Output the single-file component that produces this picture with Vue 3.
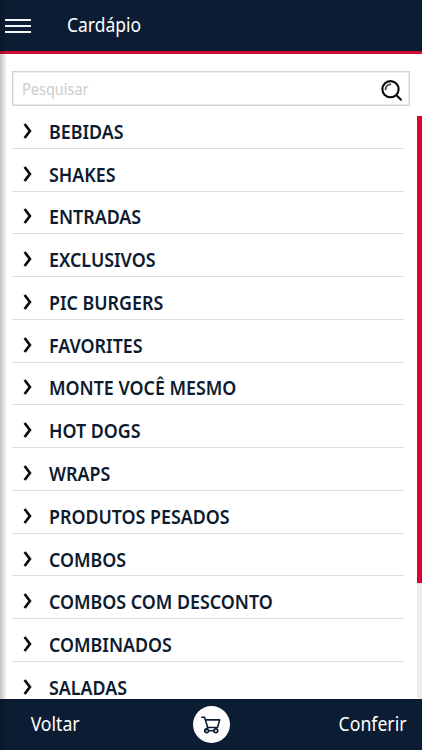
<template>
  <div class="menu-page">
    <header class="top-bar">
      <button class="menu-button" aria-label="Menu">
        <span></span>
        <span></span>
        <span></span>
      </button>
      <h1>Cardápio</h1>
    </header>

    <main class="content">
      <div class="search-box">
        <input v-model="search" type="text" placeholder="Pesquisar" />
        <svg class="search-icon" viewBox="0 0 24 24">
          <circle cx="10.5" cy="10.2" r="8.1" />
          <path class="shine" d="M5.6 10.2a5 5 0 0 1 4.8-4.8" />
          <path d="M16.5 16.3l4.4 4.4" />
        </svg>
      </div>

      <div class="list-area">
        <ul class="category-list">
          <li v-for="category in filteredCategories" :key="category">
            <svg class="chevron" viewBox="0 0 10 16">
              <path d="M1.6 1l5.3 7-5.3 7" />
            </svg>
            <span class="category-name">{{ category }}</span>
          </li>
        </ul>
        <div class="scrollbar">
          <div class="scrollbar-thumb"></div>
        </div>
      </div>
    </main>

    <footer class="bottom-bar">
      <button class="footer-link">Voltar</button>
      <button class="cart-button" aria-label="Carrinho">
        <svg viewBox="0 0 20 18">
          <path d="M.8 1.3h2.7l3.2 10.2h9.8l2.2-7.6H4.4" />
          <path d="M6.7 11.5l-1.6 2.7M7.5 14.8h6" />
          <circle cx="5.6" cy="14.8" r="1.9" />
          <circle cx="14.8" cy="14.8" r="1.9" />
        </svg>
      </button>
      <button class="footer-link right">Conferir</button>
    </footer>

    <div class="edge-shadow"></div>
  </div>
</template>

<script setup>
import { computed, ref } from 'vue';

const search = ref('');

const categories = [
  'BEBIDAS',
  'SHAKES',
  'ENTRADAS',
  'EXCLUSIVOS',
  'PIC BURGERS',
  'FAVORITES',
  'MONTE VOCÊ MESMO',
  'HOT DOGS',
  'WRAPS',
  'PRODUTOS PESADOS',
  'COMBOS',
  'COMBOS COM DESCONTO',
  'COMBINADOS',
  'SALADAS'
];

const filteredCategories = computed(() =>
  categories.filter((category) => category.includes(search.value.toUpperCase()))
);
</script>

<style>
body {
  margin: 0;
  overflow: hidden;
}
</style>

<style scoped>
.menu-page {
  position: relative;
  display: flex;
  flex-direction: column;
  height: 100vh;
  overflow: hidden;
  background: #fff;
  font-family: "Noto Sans", sans-serif;
}

button {
  padding: 0;
  border: 0;
  background: none;
  font-family: inherit;
}

.top-bar {
  box-sizing: border-box;
  display: flex;
  align-items: center;
  flex: none;
  height: 54px;
  padding: 0 0 1px 5px;
  border-bottom: 3px solid #d30c35;
  background: #0c1d33;
  color: #fff;
}

.menu-button {
  display: flex;
  flex-direction: column;
  gap: 4px;
  width: 26px;
  margin-top: 2px;
}

.menu-button span {
  height: 2px;
  background: #f3f6f8;
}

h1 {
  margin: 0 0 1px 35.5px;
  font-size: 19.3px;
  font-weight: 400;
  transform: scaleX(0.905);
  transform-origin: left;
}

.content {
  display: flex;
  flex-direction: column;
  flex: 1;
  min-height: 0;
  padding-top: 17px;
}

.search-box {
  box-sizing: border-box;
  display: flex;
  align-items: center;
  flex: none;
  height: 35px;
  margin: 0 12px;
  padding: 0 5px 0 9px;
  border: 1px solid #d2d2d2;
  box-shadow: inset 0 0 0 1px #ececec;
}

input {
  flex: 1;
  min-width: 0;
  padding: 0;
  border: 0;
  outline: 0;
  font-family: inherit;
  font-size: 15.5px;
  transform: scaleX(0.935);
  transform-origin: left;
}

input::placeholder {
  color: #ccc;
}

.search-icon {
  width: 24px;
  height: 24px;
  margin-top: 4px;
  fill: none;
  stroke: #080808;
  stroke-width: 2.1;
  stroke-linecap: round;
}

.search-icon .shine {
  stroke: #444;
  stroke-width: 1.9;
}

.list-area {
  display: flex;
  flex: 1;
  min-height: 0;
  overflow: hidden;
}

.category-list {
  flex: 1;
  margin: 0 12.5px 0 12px;
  padding: 0;
  list-style: none;
}

li {
  box-sizing: border-box;
  display: flex;
  align-items: center;
  height: 42.77px;
  padding: 10px 0 0 11px;
  border-bottom: 1px solid #dcdcdc;
}

.chevron {
  width: 10px;
  height: 16px;
  margin-top: -2px;
  fill: none;
  stroke: #0b0b0b;
  stroke-width: 2.7;
}

.category-name {
  margin-left: 16.3px;
  color: #0c1b30;
  font-size: 19px;
  font-weight: 600;
  line-height: 20px;
  white-space: nowrap;
  transform: scaleX(0.938);
  transform-origin: left;
}

.scrollbar {
  flex: none;
  width: 5.5px;
  margin-top: 10px;
  background: #ededed;
}

.scrollbar-thumb {
  height: 467px;
  background: #d8062f;
}

.bottom-bar {
  box-sizing: border-box;
  display: grid;
  grid-template-columns: 1fr 37px 1fr;
  align-items: center;
  flex: none;
  height: 51px;
  padding: 0 16px;
  background: #0c1d33;
}

.footer-link {
  padding-left: 16px;
  color: #fff;
  font-size: 19.3px;
  text-align: left;
  transform: translateY(-1px) scaleX(0.915);
  transform-origin: left;
}

.footer-link.right {
  padding-left: 0;
  text-align: right;
  transform-origin: right;
}

.cart-button {
  display: flex;
  align-items: center;
  justify-content: center;
  width: 37px;
  height: 37px;
  border-radius: 50%;
  background: #fff;
}

.cart-button svg {
  width: 20px;
  height: 18px;
  fill: none;
  stroke: #0c1d33;
  stroke-width: 1.6;
  stroke-linecap: round;
  stroke-linejoin: round;
}

.edge-shadow {
  position: absolute;
  top: 0;
  bottom: 0;
  left: 0;
  width: 7px;
  background: linear-gradient(to right, rgba(0, 0, 0, 0.24), rgba(0, 0, 0, 0));
  pointer-events: none;
}
</style>
